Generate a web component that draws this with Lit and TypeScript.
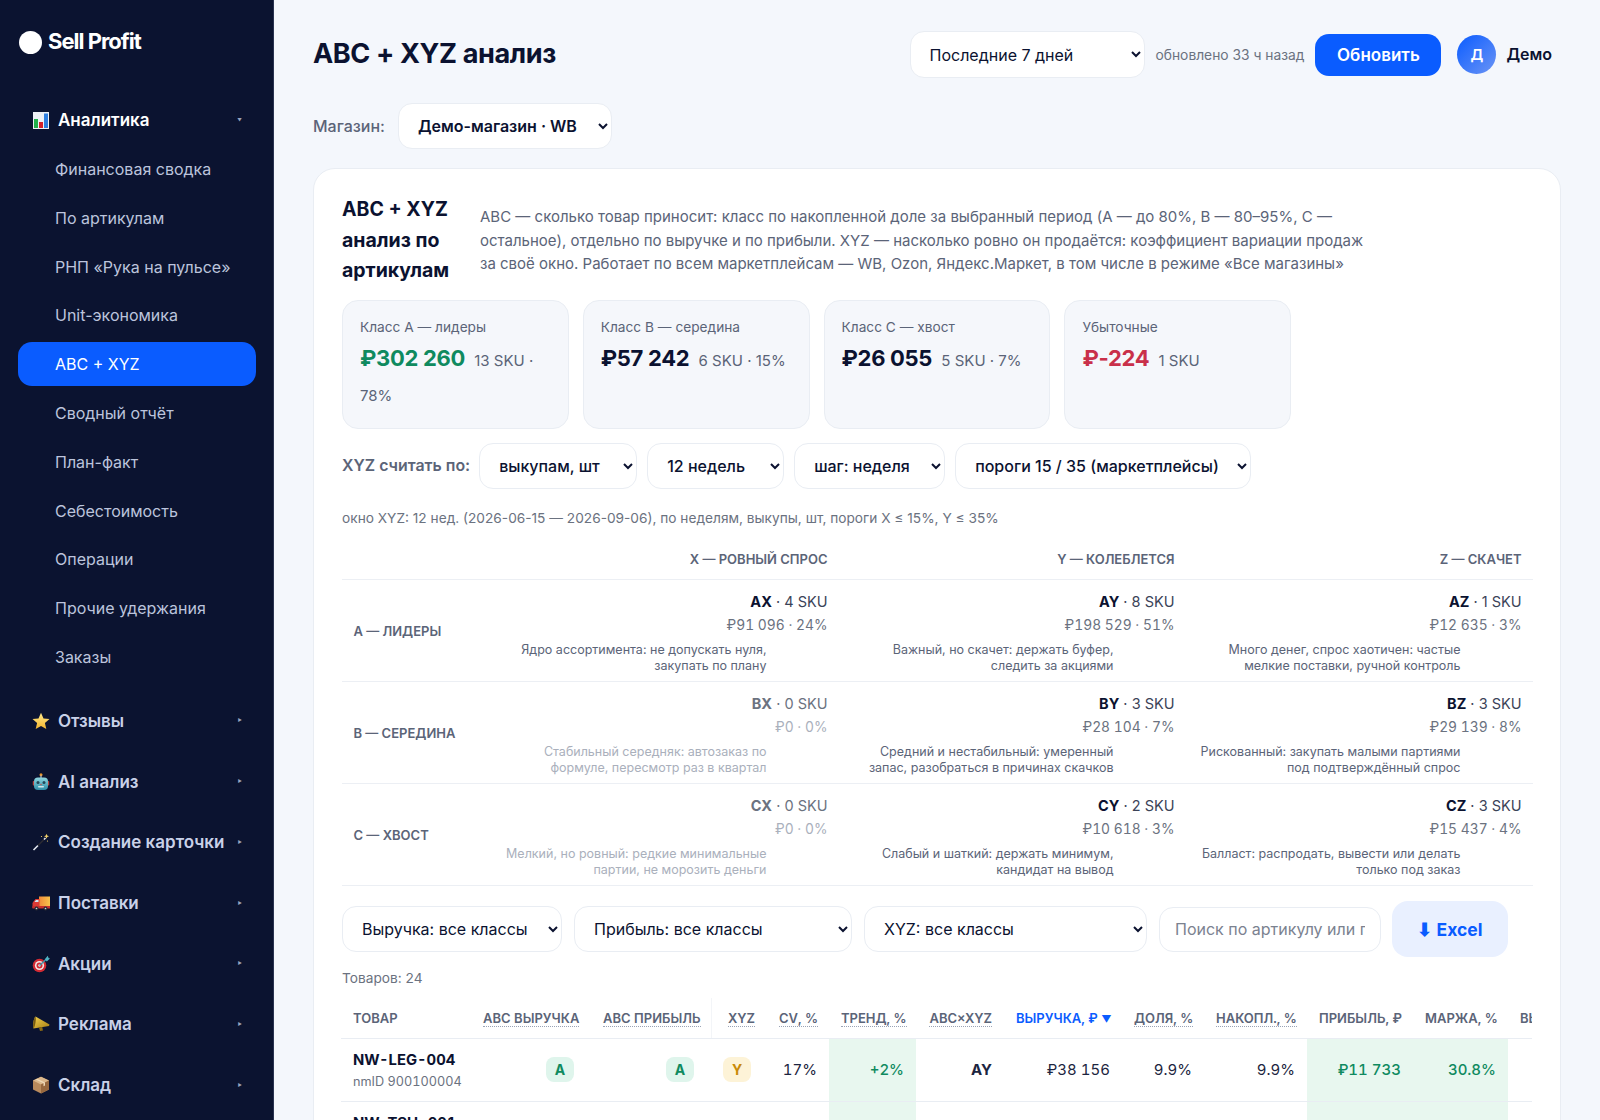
import { LitElement, html, css, svg } from "lit";
import { customElement } from "lit/decorators.js";

const ic = (body: unknown) => html`<svg class="em" viewBox="0 0 18 18" width="18" height="18" aria-hidden="true">${body}</svg>`;
const icons: Record<string, unknown> = {
  chart: ic(svg`<rect x="1" y="1" width="16" height="17" fill="#eef1f6"/><rect x="2" y="8" width="4" height="9" fill="#22b04a"/><rect x="7" y="11" width="4" height="6" fill="#d4232b"/><rect x="12" y="2.5" width="4" height="14.5" fill="#2f7fe0"/>`),
  star: ic(svg`<defs><linearGradient id="gs" x1="0" y1="0" x2="0" y2="1"><stop offset="0" stop-color="#ffe98a"/><stop offset="1" stop-color="#f5b52e"/></linearGradient></defs><path d="M9 .8l2.5 5.6 6 .6-4.6 4 1.4 6L9 14l-5.300 3 1.400-6-4.600-4 6-.6z" fill="url(#gs)"/>`),
  robot: ic(svg`<defs><linearGradient id="gr" x1="0" y1="0" x2="0" y2="1"><stop offset="0" stop-color="#8fd6e0"/><stop offset="1" stop-color="#2f8ea8"/></linearGradient></defs><circle cx="9" cy="1.800" r="1.500" fill="#e8962e"/><rect x="8.400" y="2.500" width="1.200" height="3" fill="#b9c6cf"/><rect x=".8" y="8" width="2" height="4.500" rx=".8" fill="#b8443f"/><rect x="15.200" y="8" width="2" height="4.500" rx=".8" fill="#b8443f"/><rect x="2" y="4.500" width="14" height="12.500" rx="4" fill="url(#gr)"/><circle cx="6" cy="9.500" r="1.500" fill="#234a5a"/><circle cx="12" cy="9.500" r="1.500" fill="#234a5a"/><rect x="6" y="13" width="6" height="1.500" rx=".7" fill="#d0e6ea"/><circle cx="9" cy="11.500" r=".8" fill="#c4534e"/>`),
  wand: ic(svg`<path d="M1.500 17L6 12.500" stroke="#e4e8f0" stroke-width="1.600"/><path d="M6 12.500L12 6.500" stroke="#2a2a33" stroke-width="1.600"/><path d="M12 6.500L13.500 5" stroke="#e4e8f0" stroke-width="1.600"/><path d="M14.500 .8l.7 1.800 1.800.7-1.800.7-.7 1.800-.7-1.800-1.800-.7 1.800-.7z" fill="#f6d36a"/><circle cx="9.500" cy="3.500" r=".6" fill="#f6d36a"/><circle cx="15.500" cy="8" r=".6" fill="#f6d36a"/>`),
  truck: ic(svg`<defs><linearGradient id="gt" x1="0" y1="0" x2="1" y2="0"><stop offset="0" stop-color="#f08a3a"/><stop offset="1" stop-color="#f7c34b"/></linearGradient></defs><rect x="7" y="2.500" width="11" height="10" fill="url(#gt)"/><path d="M1.500 7.500L3.500 5H7.500V14H.5V9z" fill="#dc3a35"/><path d="M2.500 8l1.500-2h2.500v2z" fill="#cfe6f2"/><rect x=".5" y="12" width="17.500" height="2.500" fill="#c72f2c"/><circle cx="4.500" cy="14.500" r="2" fill="#2b2b33"/><circle cx="13.500" cy="14.500" r="2" fill="#2b2b33"/><circle cx="4.500" cy="14.500" r=".8" fill="#cfd3da"/><circle cx="13.500" cy="14.500" r=".8" fill="#cfd3da"/>`),
  target: ic(svg`<circle cx="7.500" cy="10.500" r="6.800" fill="#d22a33"/><circle cx="7.500" cy="10.500" r="4.600" fill="#f4e8e6"/><circle cx="7.500" cy="10.500" r="3" fill="#d22a33"/><circle cx="7.500" cy="10.500" r="1.200" fill="#f4e8e6"/><path d="M7.500 10.500L14 4.500" stroke="#3f97a8" stroke-width="1.500"/><path d="M12.800 4.200L15.800 .8 16.500 3 18 3.500 14.800 6.500z" fill="#4fb3c4"/>`),
  horn: ic(svg`<defs><linearGradient id="gh" x1="0" y1="0" x2="1" y2="1"><stop offset="0" stop-color="#f2d04e"/><stop offset="1" stop-color="#a87f14"/></linearGradient></defs><path d="M3.500 1.500L17.500 9.500 17 11 1.500 13.500C.5 10 1.500 4 3.500 1.500z" fill="url(#gh)"/><path d="M3.500 1.500C1.500 4 .5 10 1.500 13.500 3 12 4.500 4.500 3.500 1.500z" fill="#7a5c10"/><path d="M7 12.500l1 3.500 3-.5-.8-3.500z" fill="#8a6a14"/>`),
  box: ic(svg`<path d="M9 .8L17 4.500V13.500L9 17.500 1 13.500V4.500z" fill="#b98a5c"/><path d="M9 .8L17 4.500 9 8.500 1 4.500z" fill="#dcb88c"/><path d="M9 8.500L17 4.500V13.500L9 17.500z" fill="#97683f"/><path d="M5 2.700L13 6.500V9.500L11.500 10.200V7.200L3.500 3.400z" fill="#efd9b8"/>`),
};

const subItems = ["Финансовая сводка","По артикулам","РНП «Рука на пульсе»","Unit-экономика","ABC + XYZ","Сводный отчёт","План-факт","Себестоимость","Операции","Прочие удержания","Заказы"];
const groups = [["star","Отзывы"],["robot","AI анализ"],["wand","Создание карточки"],["truck","Поставки"],["target","Акции"],["horn","Реклама"],["box","Склад"]];
const stats = [
  {l:"Класс A — лидеры",v:"₽302 260",s:"13 SKU · 78%",c:"green"},
  {l:"Класс B — середина",v:"₽57 242",s:"6 SKU · 15%",c:""},
  {l:"Класс C — хвост",v:"₽26 055",s:"5 SKU · 7%",c:""},
  {l:"Убыточные",v:"₽-224",s:"1 SKU",c:"red"},
];
const matrix = [
  {h:"A — лидеры",cells:[
    {k:"AX",n:"4 SKU",v:"₽91 096 · 24%",t:"Ядро ассортимента: не допускать нуля, закупать по плану"},
    {k:"AY",n:"8 SKU",v:"₽198 529 · 51%",t:"Важный, но скачет: держать буфер, следить за акциями"},
    {k:"AZ",n:"1 SKU",v:"₽12 635 · 3%",t:"Много денег, спрос хаотичен: частые мелкие поставки, ручной контроль"}]},
  {h:"B — середина",cells:[
    {k:"BX",n:"0 SKU",v:"₽0 · 0%",t:"Стабильный середняк: автозаказ по формуле, пересмотр раз в квартал",e:1},
    {k:"BY",n:"3 SKU",v:"₽28 104 · 7%",t:"Средний и нестабильный: умеренный запас, разобраться в причинах скачков"},
    {k:"BZ",n:"3 SKU",v:"₽29 139 · 8%",t:"Рискованный: закупать малыми партиями под подтверждённый спрос"}]},
  {h:"C — хвост",cells:[
    {k:"CX",n:"0 SKU",v:"₽0 · 0%",t:"Мелкий, но ровный: редкие минимальные партии, не морозить деньги",e:1},
    {k:"CY",n:"2 SKU",v:"₽10 618 · 3%",t:"Слабый и шаткий: держать минимум, кандидат на вывод"},
    {k:"CZ",n:"3 SKU",v:"₽15 437 · 4%",t:"Балласт: распродать, вывести или делать только под заказ"}]},
];
const cols: [string,number,string?][] = [
  ["Товар",130,"plain"],["ABC выручка",120],["ABC прибыль",120,"div"],["XYZ",56],["CV, %",62],["Тренд, %",87],["ABC×XYZ",88],
  ["Выручка, ₽",118,"active"],["Доля, %",82],["Накопл., %",103],["Прибыль, ₽",106,"plain"],["Маржа, %",95,"plain"],["Выкупы, шт",110,"plain"],
];

@customElement("app-root")
export class AppRoot extends LitElement {
  static styles = css`
    :host { display:flex; height:100vh; overflow:hidden; background:#f4f7fc; color:#0b1230;
      font-family:Inter,"Noto Sans",sans-serif; font-size:15px; }
    * { box-sizing:border-box; }
    select, input, button { font-family:inherit; }
    .side { flex:0 0 274px; background:#0b1330; border-right:1px solid #2a3350; padding:0 17px 0 18px; overflow:hidden; }
    .logo { display:flex; align-items:center; height:40px; margin:21px 0 37px 1px; color:#fff; font-size:22px; font-weight:700; letter-spacing:-1px; gap:6px; }
    .dot { width:23px; height:23px; border-radius:50%; background:#fff; margin-top:2px; }
    .gh { display:flex; align-items:center; height:44px; padding:0 14px; color:#c9d1e8; font-size:17px; font-weight:600; margin-bottom:16.7px; }
    .gh.open { color:#fff; margin-bottom:5px; }
    .gh .em { margin-right:8px; flex:none; }
    .gh .lb { flex:1; white-space:nowrap; }
    .gh .car { font-size:4.500px; color:#9aa3bd; margin-right:0; }
    .it { display:flex; align-items:center; height:44px; padding-left:37px; margin-bottom:4.8px; color:#bcc4dc; font-size:16px; border-radius:14px; }
    .it.on { background:#0a5cff; color:#fff; }
    .subs { margin-bottom:20px; }
    .main { flex:1; min-width:0; padding:31px 39px 0 39px; }
    .top { display:flex; align-items:center; height:47px; }
    h1 { margin:0 0 2px; font-size:27.100px; font-weight:700; letter-spacing:-.4px; flex:1; }
    select { appearance:auto; background:#fff; border:1px solid #e9edf3; border-radius:14px; font-size:16px; color:#0b1230; height:46px; padding:0 15px; }
    .top select { height:47px; }
    .upd { font-size:13.8px; color:#6b7280; margin:0 11px; white-space:nowrap; }
    .btn { height:42px; width:126px; background:#0a5cff; color:#fff; border:0; border-radius:14px; font-size:17px; font-weight:600; }
    .ava { width:39px; height:39px; border-radius:50%; margin-left:16px; background:linear-gradient(135deg,#0a5cff,#6b94f5); color:#fff; display:flex; align-items:center; justify-content:center; font-weight:600; font-size:15px; }
    .who { font-size:16px; font-weight:600; margin:0 9px 2px 10px; }
    .shop { display:flex; align-items:center; margin-top:25px; gap:13px; color:#5b6478; font-size:16px; font-weight:500; }
    .shop select { width:214px; font-weight:600; }
    .card { margin-top:19px; background:#fff; border:1px solid #e9edf3; border-radius:22px; padding:28px 28px 40px 28px; width:1248px; }
    .hd { display:flex; gap:28px; align-items:flex-start; }
    h2 { margin:-3px 0 0; font-size:19.500px; line-height:30.5px; font-weight:700; width:110px; flex:none; }
    .desc { margin:8px 0 0; font-size:15px; line-height:23.5px; color:#5b6478; width:890px; }
    .stats { display:grid; grid-template-columns:repeat(auto-fill,minmax(220px,1fr)); gap:14px; margin-top:14px; }
    .st { background:#f5f7fb; border:1px solid #e9edf3; border-radius:16px; padding:17px; height:129px; }
    .st .l { font-size:13.7px; color:#5b6478; line-height:18px; }
    .st .b { margin-top:5.500px; line-height:35px; }
    .st .v { font-size:22px; font-weight:700; margin-right:5px; letter-spacing:-.3px; }
    .st .s { font-size:15px; color:#5b6478; }
    .green { color:#0f8a5f; } .red { color:#c9304a; }
    .xyz { display:flex; align-items:center; gap:10px; margin-top:14px; }
    .xyz label { font-size:15.9px; font-weight:600; color:#5b6478; margin-right:-1px; white-space:nowrap; }
    .xyz select { font-weight:500; }
    .note { margin-top:19px; font-size:13.7px; color:#6b7280; line-height:20px; }
    table { border-collapse:collapse; }
    .mx { width:1191px; table-layout:fixed; margin-top:11px; }
    .mx th { font-size:13px; font-weight:600; color:#5b6478; text-transform:uppercase; text-align:right; padding:0 11.500px; height:41px; border-bottom:1px solid #eceff4; }
    .mx th:first-child, .mx .rh { text-align:left; }
    .mx td { padding:11px 11.500px 0; border-bottom:1px solid #eceff4; text-align:right; height:102px; vertical-align:top; }
    .mx .rh { font-size:13px; font-weight:600; color:#5b6478; text-transform:uppercase; vertical-align:middle; padding-top:0; }
    .ck { font-size:14.5px; line-height:22px; color:#3b4358; }
    .ck b { color:#0b1230; font-weight:700; }
    .cv { font-size:13.8px; color:#6b7280; line-height:24px; font-variant-numeric:tabular-nums; }
    .ct { font-size:12.5px; line-height:16px; color:#5b6478; width:263px; margin-top:4.500px; }
    .e .ck { color:#6b7280; } .e .ck b { color:#6b7280; }
    .e .cv, .e .ct { color:#aab0bc; }
    .flt { display:flex; align-items:center; gap:12px; margin-top:15px; height:56px; }
    .flt input { height:45px; width:222px; border:1px solid #e9edf3; border-radius:14px; padding:0 15px; font-size:16px; }
    .flt input::placeholder { color:#7b8290; }
    .xl { width:116px; height:56px; border:0; border-radius:16px; background:#e9f0ff; color:#0a5cff; font-size:17.500px; font-weight:700; margin-left:-1px; flex:none; }
    .cnt { font-size:13.7px; color:#6b7280; margin-top:11px; line-height:20px; }
    .wrap { width:1191px; overflow:hidden; margin:10px 0 0 -1px; }
    .tb { table-layout:fixed; width:1277px; font-size:15px; font-variant-numeric:tabular-nums; }
    .tb th { height:40px; padding:0 12px; font-size:13px; font-weight:600; color:#5b6478; text-transform:uppercase; text-align:right; border-bottom:1px solid #e9edf3; white-space:nowrap; overflow:hidden; }
    .tb th:first-child, .tb td:first-child { text-align:left; }
    .tb th span { border-bottom:1px dotted #9aa3b5; }
    .tb th.plain span { border:0; }
    .tb th.active { color:#0a5cff; }
    .tb th.active span { border:0; }
    .tb th small { font-size:10px; }
    .tb th.div { border-right:1px solid #f3f5f8; }
    .tb td { height:63px; padding:0 12px; text-align:right; border-bottom:1px solid #e9edf3; white-space:nowrap; color:#1c2540; }
    .sku { font-size:14.8px; font-weight:700; letter-spacing:0; color:#0b1230; }
    .nm { font-size:12.7px; color:#6b7280; margin-top:5px; }
    .bd { display:inline-flex; width:28px; height:25px; align-items:center; justify-content:center; border-radius:8px; font-size:14px; font-weight:700; margin-right:5px; vertical-align:middle; }
    .ba { background:#dff5ec; color:#0f8a5f; } .by { background:#fdf3d7; color:#c98a08; } .bx { background:#e4ebff; color:#0a5cff; }
    td.pos { background:#e8f7ef; color:#0f8a5f; font-weight:500; }
    .bold { font-weight:700; color:#0b1230; }
  `;
  render() {
    return html`
      <aside class="side">
        <div class="logo"><span class="dot"></span>Sell Profit</div>
        <div class="gh open">${icons.chart}<span class="lb">Аналитика</span><span class="car">▼</span></div>
        <div class="subs">${subItems.map(s => html`<div class="it ${s === "ABC + XYZ" ? "on" : ""}">${s}</div>`)}</div>
        ${groups.map(([e, l]) => html`<div class="gh">${icons[e]}<span class="lb">${l}</span><span class="car">▶</span></div>`)}
      </aside>
      <main class="main">
        <div class="top">
          <h1>ABC + XYZ анализ</h1>
          <select style="width:235px"><option>Последние 7 дней</option></select>
          <span class="upd">обновлено 33 ч назад</span>
          <button class="btn">Обновить</button>
          <div class="ava">Д</div>
          <div class="who">Демо</div>
        </div>
        <div class="shop">Магазин: <select><option>Демо-магазин · WB</option></select></div>
        <section class="card">
          <div class="hd">
            <h2>ABC + XYZ анализ по артикулам</h2>
            <p class="desc">ABC — сколько товар приносит: класс по накопленной доле за выбранный период (A — до 80%, B — 80–95%, C — остальное), отдельно по выручке и по прибыли. XYZ — насколько ровно он продаётся: коэффициент вариации продаж за своё окно. Работает по всем маркетплейсам — WB, Ozon, Яндекс.Маркет, в том числе в режиме «Все магазины»</p>
          </div>
          <div class="stats">
            ${stats.map(s => html`<div class="st"><div class="l">${s.l}</div><div class="b"><span class="v ${s.c}">${s.v}</span> <span class="s">${s.s}</span></div></div>`)}
          </div>
          <div class="xyz">
            <label>XYZ считать по:</label>
            <select style="width:158px"><option>выкупам, шт</option></select>
            <select style="width:137px"><option>12 недель</option></select>
            <select style="width:151px"><option>шаг: неделя</option></select>
            <select style="width:296px"><option>пороги 15 / 35 (маркетплейсы)</option></select>
          </div>
          <div class="note">окно XYZ: 12 нед. (2026-06-15 — 2026-09-06), по неделям, выкупы, шт, пороги X ≤ 15%, Y ≤ 35%</div>
          <table class="mx">
            <colgroup><col style="width:150px"><col><col><col></colgroup>
            <thead><tr><th></th><th>X — ровный спрос</th><th>Y — колеблется</th><th>Z — скачет</th></tr></thead>
            <tbody>
              ${matrix.map(r => html`<tr><td class="rh">${r.h}</td>${r.cells.map((c: any) => html`<td class="${c.e ? "e" : ""}"><div class="ck"><b>${c.k}</b> · ${c.n}</div><div class="cv">${c.v}</div><div class="ct">${c.t}</div></td>`)}</tr>`)}
            </tbody>
          </table>
          <div class="flt">
            <select style="width:220px"><option>Выручка: все классы</option></select>
            <select style="width:278px"><option>Прибыль: все классы</option></select>
            <select style="width:283px"><option>XYZ: все классы</option></select>
            <input placeholder="Поиск по артикулу или предмету" />
            <button class="xl">⬇ Excel</button>
          </div>
          <div class="cnt">Товаров: 24</div>
          <div class="wrap">
            <table class="tb">
              <colgroup>${cols.map(c => html`<col style="width:${c[1]}px">`)}</colgroup>
              <thead><tr>${cols.map(c => html`<th class="${c[2] ?? ""}"><span>${c[0]}${c[2] === "active" ? html` <small>▼</small>` : ""}</span></th>`)}</tr></thead>
              <tbody>
                <tr>
                  <td><div class="sku">NW-LEG-004</div><div class="nm">nmID 900100004</div></td>
                  <td><span class="bd ba">A</span></td><td><span class="bd ba">A</span></td><td><span class="bd by">Y</span></td>
                  <td>17%</td><td class="pos">+2%</td><td class="bold">AY</td><td>₽38 156</td><td>9.9%</td><td>9.9%</td>
                  <td class="pos">₽11 733</td><td class="pos">30.8%</td><td></td>
                </tr>
                <tr>
                  <td><div class="sku">NW-TSH-001</div><div class="nm">nmID 900100001</div></td>
                  <td><span class="bd ba">A</span></td><td><span class="bd ba">A</span></td><td><span class="bd bx">X</span></td>
                  <td></td><td class="pos"></td><td></td><td></td><td></td><td></td><td class="pos"></td><td class="pos"></td><td></td>
                </tr>
              </tbody>
            </table>
          </div>
        </section>
      </main>
    `;
  }
}
